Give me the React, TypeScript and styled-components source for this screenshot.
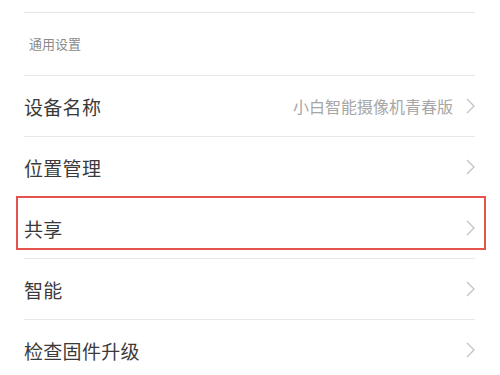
import React from "react";
import styled, { createGlobalStyle } from "styled-components";

const Global = createGlobalStyle`
  html, body { margin: 0; padding: 0; background: #ffffff; }
  body { font-family: "Noto Sans CJK SC", "Noto Sans", sans-serif; }
`;

const Page = styled.div`
  width: 500px;
  height: 375px;
  overflow: hidden;
  background: #fff;
  padding: 0 25px 0 24px;
  box-sizing: border-box;
`;

const TopSpacer = styled.div`
  height: 12px;
  border-bottom: 1px solid #e6e6e6;
`;

const SectionHeader = styled.div`
  height: 63px;
  display: flex;
  align-items: center;
  padding-left: 5px;
  font-size: 13px;
  color: #8a8a8a;
  border-bottom: 1px solid #e8e8e8;
  box-sizing: border-box;
  padding-bottom: 2px;
`;

const Row = styled.div`
  position: relative;
  height: 60px;
  display: flex;
  align-items: center;
  justify-content: space-between;
  border-bottom: 1px solid #e8e8e8;
`;

const Label = styled.span`
  font-size: 19px;
  color: #3a3a3a;
  letter-spacing: 0.3px;
`;

const Right = styled.div`
  display: flex;
  align-items: center;
  gap: 13px;
`;

const Value = styled.span`
  font-size: 16px;
  color: #a6a6a6;
`;

const Chevron = styled.svg`
  width: 9px;
  height: 16px;
  display: block;
`;

const Highlight = styled.div`
  position: absolute;
  top: -2px;
  left: -8px;
  right: -11px;
  height: 54px;
  border: 2px solid #e5534b;
  box-sizing: border-box;
  pointer-events: none;
`;

const Arrow = () => (
  <Chevron viewBox="0 0 9 16">
    <path d="M1 1 L8 8 L1 15" fill="none" stroke="#c2c2c2" strokeWidth="1.3" />
  </Chevron>
);

type Item = { label: string; value?: string; highlighted?: boolean };

const items: Item[] = [
  { label: "设备名称", value: "小白智能摄像机青春版" },
  { label: "位置管理" },
  { label: "共享", highlighted: true },
  { label: "智能" },
  { label: "检查固件升级" },
];

export default function App() {
  return (
    <>
      <Global />
      <Page>
        <TopSpacer />
        <SectionHeader>通用设置</SectionHeader>
        {items.map((it) => (
          <Row key={it.label}>
            <Label>{it.label}</Label>
            <Right>
              {it.value && <Value>{it.value}</Value>}
              <Arrow />
            </Right>
            {it.highlighted && <Highlight />}
          </Row>
        ))}
      </Page>
    </>
  );
}
